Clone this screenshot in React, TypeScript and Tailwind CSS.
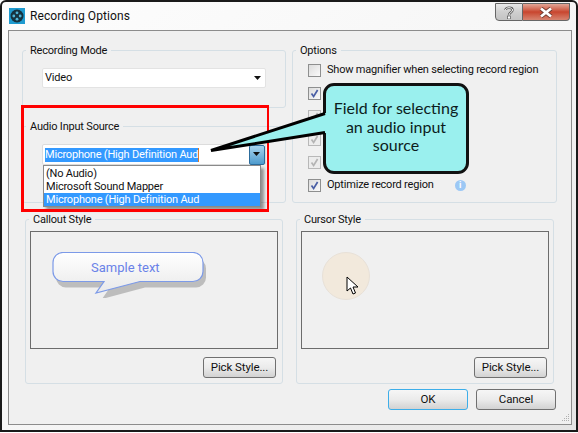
const ui = { fontFamily: 'Roboto, "Liberation Sans", sans-serif' };

function Group({ title, className, children }: { title: string; className: string; children: React.ReactNode }) {
  return (
    <fieldset className={`border border-[#d5dfe5] rounded-[3px] min-w-0 ${className}`}>
      <legend className="ml-[3px] px-1 h-4 leading-[18px] text-[#111]">{title}</legend>
      {children}
    </fieldset>
  );
}

function Caret() {
  return (
    <svg width="8" height="5" viewBox="0 0 8 5" className="shrink-0">
      <path d="M0 0h7L3.5 4z" fill="#111" />
    </svg>
  );
}

function Check({ checked, dim }: { checked?: boolean; dim?: boolean }) {
  return (
    <span className={`w-[13px] h-[13px] border shrink-0 flex items-center justify-center ${dim ? 'border-[#b8b8b8] bg-[#ececec]' : 'border-[#8e8f8f] bg-gradient-to-br from-[#dcdcdc] to-[#fafafa]'}`}>
      {checked && (
        <svg width="9" height="9" viewBox="0 0 9 9">
          <path d="M1.5 4.5L3.6 7.4 7.6 1" fill="none" stroke={dim ? '#b4b4b4' : '#4a5fa5'} strokeWidth="1.7" />
        </svg>
      )}
    </span>
  );
}

function SysButton({ label, className }: { label: string; className: string }) {
  return (
    <button className={`h-[21px] border rounded-[3px] bg-gradient-to-b from-[#f6f6f6] via-[#ebebeb] to-[#d2d2d2] text-[#111] text-[11.5px] tracking-[-0.1px] ${className}`}>
      {label}
    </button>
  );
}

export default function App() {
  return (
    <div className="relative w-[578px] h-[433px] overflow-hidden bg-white text-[11px] tracking-[-0.2px]" style={ui}>
      <div className="h-[432px] border-2 border-[#1a1a1a] rounded-t-[6px] bg-gradient-to-br from-[#fdfdfd] via-[#f6f6f6] to-[#e4e4e4] flex flex-col">
        {/* Title bar */}
        <div className="h-[28px] shrink-0 flex items-start">
          <svg width="16" height="16" viewBox="0 0 16 16" className="ml-[7px] mt-[6px]">
            <rect width="16" height="16" fill="#1f9bd0" />
            <circle cx="8" cy="8" r="6.5" fill="#16323f" />
            <circle cx="8" cy="4.8" r="1.4" fill="#4fb4d8" />
            <circle cx="8" cy="11.2" r="1.4" fill="#4fb4d8" />
            <circle cx="4.8" cy="8" r="1.4" fill="#4fb4d8" />
            <circle cx="11.2" cy="8" r="1.4" fill="#4fb4d8" />
          </svg>
          <span className="ml-[5px] mt-[6px] text-[12px] tracking-[0.1px] leading-4 text-[#111]">Recording Options</span>
          <div className="ml-auto mr-[6px] flex h-[18px] mt-[1px]">
            <div className="w-[28px] border border-[#666] rounded-bl-[4px] bg-gradient-to-b from-[#e8e8e8] via-[#cfcfcf] to-[#c4c4c4] flex items-center justify-center">
              <svg width="10" height="13" viewBox="0 0 10 13">
                <path d="M1.500 4C1.500 1 8.500 1 8.500 4c0 2.500-3.500 2.500-3.500 5" fill="none" stroke="#555" strokeWidth="2.400" />
                <path d="M1.500 4C1.500 1 8.500 1 8.500 4c0 2.500-3.500 2.500-3.500 5" fill="none" stroke="#fff" strokeWidth="1" />
                <rect x="3.500" y="10" width="3" height="3" fill="#fff" stroke="#555" strokeWidth="0.700" />
              </svg>
            </div>
            <div className="w-[47px] border-y border-r border-[#666] rounded-br-[4px] bg-gradient-to-b from-[#e2a596] via-[#c8452e] to-[#d6836f] flex items-center justify-center">
              <svg width="16" height="11" viewBox="0 0 16 11">
                <path d="M3 1.500l10 8M13 1.500l-10 8" stroke="#6e3a30" strokeWidth="4.400" />
                <path d="M3 1.500l10 8M13 1.500l-10 8" stroke="#fff" strokeWidth="2.800" />
              </svg>
            </div>
          </div>
        </div>

        {/* Dialog body */}
        <div className="relative ml-[6px] mr-[4px] h-[395px] border border-[#8c8c8c] bg-[#f0f0f0] flex flex-col">
          <div className="flex pl-[13px] pt-[11px] gap-[6px]">
            <div className="w-[264px] flex flex-col gap-[10px]">
              <Group title="Recording Mode" className="pb-[19px]">
                <div className="mx-[19px] mt-[10px] h-[20px] bg-white border border-[#e3e3e3] rounded-[2px] flex items-center justify-between pl-[2px] pr-[3px]">
                  <span className="text-[#111]">Video</span>
                  <Caret />
                </div>
              </Group>
              <Group title="Audio Input Source" className="pb-[37px]">
                <div className="relative mx-[19px] mt-[10px] h-[21px] bg-white border border-[#dcdcdc] rounded-[2px] flex items-center pl-[2px]">
                  <span className="bg-[#3399ff] text-white h-[14px] leading-[14px] w-[154px] border-r border-[#d9782a] whitespace-nowrap">Microphone (High Definition Aud</span>
                  <div className="ml-auto h-[20px] w-[16px] rounded-[2px] border border-[#2c6c9c] bg-gradient-to-b from-[#a6d4ee] to-[#4d9bcd] flex items-center justify-center">
                    <Caret />
                  </div>
                  <div className="absolute left-0 top-[20px] w-[218px] h-[42px] bg-white border border-[#8a8a8a] shadow-[3px_3px_3px_rgba(0,0,0,0.4)] text-[#111] leading-[13px] py-px">
                    <div className="pl-[2px]">(No Audio)</div>
                    <div className="pl-[2px]">Microsoft Sound Mapper</div>
                    <div className="pl-[2px] bg-[#3399ff] text-white">Microphone (High Definition Aud</div>
                  </div>
                </div>
              </Group>
            </div>
            <div className="w-[265px]">
              <Group title="Options" className="pb-[10px]">
                <div className="mx-[15px] mt-[6px] flex flex-col gap-[10px]">
                  <label className="h-[13px] flex items-center gap-[6px] text-[#111] whitespace-nowrap"><Check />Show magnifier when selecting record region</label>
                  <Check checked />
                  <Check checked dim />
                  <Check checked dim />
                  <Check checked dim />
                  <label className="h-[13px] flex items-center gap-[6px] text-[#111]">
                    <Check checked />Optimize record region
                    <span className="ml-[15px] w-[11px] h-[11px] rounded-full bg-[#9cc8f5] text-white text-[9px] leading-[11px] text-center font-bold">i</span>
                  </label>
                </div>
              </Group>
            </div>
          </div>

          <div className="flex pl-[16px] pt-[8px] gap-[13px]">
            <Group title="Callout Style" className="w-[258px] pb-[5px]">
              <div className="mx-[4px] mt-[4px] h-[118px] border border-[#6c6c6c] pl-[21px] pt-[20px]">
                <div className="relative w-[156px] h-[46px]">
                  <svg width="156" height="46" viewBox="0 0 156 46" className="absolute inset-0">
                    <defs>
                      <linearGradient id="bubble" x1="0" y1="0" x2="0" y2="1">
                        <stop offset="0" stopColor="#ffffff" />
                        <stop offset="1" stopColor="#e9e9e9" />
                      </linearGradient>
                    </defs>
                    <path d="M11 3.500h130a10 10 0 0 1 10 10v9a10 10 0 0 1-10 10H90L47 44l8-11.500H11a10 10 0 0 1-10-10v-9a10 10 0 0 1 10-10z" fill="#bdbdbd" transform="translate(3 3)" />
                    <path d="M11 .5h130a10 10 0 0 1 10 10v9a10 10 0 0 1-10 10H88L44 41l8-11.500H11a10 10 0 0 1-10-10v-9a10 10 0 0 1 10-10z" fill="url(#bubble)" stroke="#7c9ae8" strokeWidth="1.200" />
                  </svg>
                  <span className="absolute left-[39px] top-[8px] text-[13px] tracking-normal leading-[16px] text-[#6a82e8]">Sample text</span>
                </div>
              </div>
              <div className="mt-[8px] mr-[6px] flex justify-end">
                <SysButton label="Pick Style..." className="w-[73px] border-[#707070]" />
              </div>
            </Group>
            <Group title="Cursor Style" className="w-[258px] pb-[5px]">
              <div className="mx-[4px] mt-[4px] h-[118px] border border-[#6c6c6c] pl-[20px] pt-[20px]">
                <div className="relative w-[48px] h-[48px] rounded-full bg-[#f2e9dc] border border-[#e8e1d8]">
                  <svg width="14" height="20" viewBox="0 0 14 20" className="absolute left-[23px] top-[23px]">
                    <path d="M1 1v14l3.500-3 2.500 6 2.500-1-2.500-6h5z" fill="#fff" stroke="#000" strokeWidth="1" />
                  </svg>
                </div>
              </div>
              <div className="mt-[8px] mr-[6px] flex justify-end">
                <SysButton label="Pick Style..." className="w-[73px] border-[#707070]" />
              </div>
            </Group>
          </div>

          <div className="flex justify-end gap-[8px] pt-[5px] pr-[15px]">
            <SysButton label="OK" className="w-[80px] border-[#3daee9]" />
            <SysButton label="Cancel" className="w-[80px] border-[#707070]" />
          </div>

          <svg width="9" height="9" viewBox="0 0 9 9" className="absolute right-[1px] bottom-[1px]">
            <path d="M7 0h1v1H7zM5 2h1v1H5zM7 2h1v1H7zM3 4h1v1H3zM5 4h1v1H5zM7 4h1v1H7zM1 6h1v1H1zM3 6h1v1H3zM5 6h1v1H5zM7 6h1v1H7z" fill="#b0b0b0" />
          </svg>
        </div>
      </div>

      {/* Annotation overlay */}
      <div className="absolute left-[21px] top-[105px] w-[248px] h-[107px] border-[3px] border-r-2 border-[#ff0000]" />
      <div className="absolute left-[323px] top-[83px] w-[146px] h-[91px] pb-[3px] rounded-[11px] border-[3px] border-[#111] bg-[#9af0ee] flex items-center justify-center text-center text-[16px] tracking-normal leading-[18.500px] text-[#0c1d1d]" style={{ fontFamily: 'Lato, sans-serif' }}>
        Field for selecting<br />an audio input<br />source
      </div>
      <svg width="122" height="50" viewBox="0 0 122 50" className="absolute left-[205px] top-[105px]">
        <path d="M6 45L121 8V28z" fill="#9af0ee" />
        <path d="M120 8.500L6 45.500L120 27.500" fill="none" stroke="#000" strokeWidth="3" />
      </svg>
    </div>
  );
}
